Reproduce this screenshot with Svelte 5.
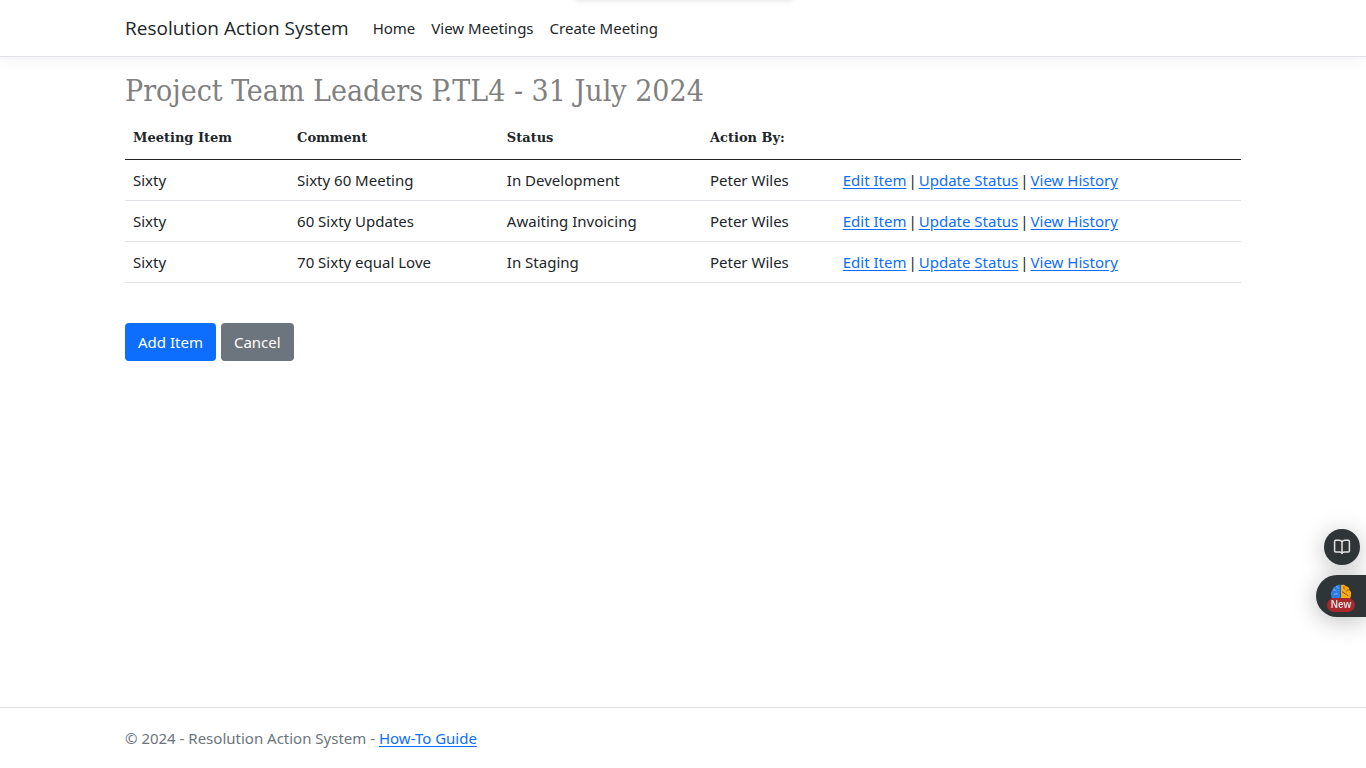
<script>
  const nav = ['Home', 'View Meetings', 'Create Meeting'];
  const actions = ['Edit Item', 'Update Status', 'View History'];
  const items = [
    { item: 'Sixty', comment: 'Sixty 60 Meeting', status: 'In Development', by: 'Peter Wiles' },
    { item: 'Sixty', comment: '60 Sixty Updates', status: 'Awaiting Invoicing', by: 'Peter Wiles' },
    { item: 'Sixty', comment: '70 Sixty equal Love', status: 'In Staging', by: 'Peter Wiles' }
  ];
</script>

<div class="page">
  <div class="top-shadow"></div>
  <header>
    <nav class="container">
      <a class="brand" href="#home">Resolution Action System</a>
      {#each nav as label}
        <a class="nav-link" href="#nav">{label}</a>
      {/each}
    </nav>
  </header>

  <main class="container">
    <h1>Project Team Leaders P.TL4 - 31 July 2024</h1>
    <table>
      <colgroup>
        <col class="c-item" /><col class="c-comment" /><col class="c-status" /><col class="c-by" /><col />
      </colgroup>
      <thead>
        <tr><th>Meeting Item</th><th>Comment</th><th>Status</th><th>Action By:</th><th></th></tr>
      </thead>
      <tbody>
        {#each items as row}
          <tr>
            <td>{row.item}</td>
            <td>{row.comment}</td>
            <td>{row.status}</td>
            <td>{row.by}</td>
            <td>
              <div class="actions">
                {#each actions as action, i}
                  {#if i > 0}<span>|</span>{/if}
                  <a href="#action">{action}</a>
                {/each}
              </div>
            </td>
          </tr>
        {/each}
      </tbody>
    </table>
    <div class="buttons">
      <button class="primary" type="button">Add Item</button>
      <button class="secondary" type="button">Cancel</button>
    </div>
  </main>

  <footer>
    <div class="container">© 2024 - Resolution Action System - <a href="#guide">How-To Guide</a></div>
  </footer>

  <aside>
    <button class="reader" type="button" aria-label="Reader">
      <svg width="18" height="18" viewBox="0 0 18 18" fill="none" stroke="#e4e2df" stroke-width="1.5" stroke-linejoin="round" stroke-linecap="round">
        <path d="M9 4.200C8.500 3 7.600 2.300 6.200 2.300H2.700Q1.600 2.300 1.600 3.400V13Q1.600 14 2.700 14H6.800C8 14 8.700 14.500 9 15.500 9.300 14.500 10 14 11.200 14H15.300Q16.400 14 16.400 13V3.400Q16.400 2.300 15.300 2.300H11.800C10.400 2.300 9.500 3 9 4.200zM9 4.200V15.500" />
      </svg>
    </button>
    <button class="brain" type="button">
      <svg width="22" height="20" viewBox="0 0 22 20">
        <path d="M10.600 1C8.500 .3 6.700 1.100 6 2.300 3.500 2.500 2.600 4.400 2.700 6 .8 7.300.5 9.500 1.200 11.500 1 14 3 16 5.500 16h5.100z" fill="#2b7de9" />
        <path d="M11 1c2.500-.7 4.300.1 5 1.300 2.500.2 3.400 2.100 3.300 3.700 1.900 1.300 2.200 3.500 1.500 5.500.2 2.500-1.800 4.500-4.300 4.500H11z" fill="#fbac13" />
        <path d="M2.700 6c1.500-.5 2.600 0 3.300 1M6 2.300c1.700.1 2.300 1.200 2 2.500M4 11c1.200-1.700 2.700-1.700 4-.7" fill="none" stroke="#79b8ff" stroke-width="1" />
        <path d="M19.300 6c-1.700-.3-2.500.4-3.300 1.500M14 2.500c-.5 1.500 0 2.500 1.200 3M12 8c1.500-.3 2.400.7 2.600 2M18 12c-.5-1.500-1.500-2-2.800-2" fill="none" stroke="#8d4b08" stroke-width="1" />
      </svg>
      <span>New</span>
    </button>
  </aside>
</div>

<style>
  :global(body) {
    margin: 0;
    background: #fff;
    color: #212529;
    font: 15px/24px "Noto Sans", "Open Sans", sans-serif;
  }
  .page {
    position: relative;
    min-height: 100vh;
    display: flex;
    flex-direction: column;
    overflow: hidden;
  }
  .top-shadow {
    position: absolute;
    top: -8px;
    left: 50%;
    width: 220px;
    height: 8px;
    margin-left: -109px;
    border-radius: 4px;
    box-shadow: 0 0 6px rgba(0, 0, 0, 0.14);
  }
  .container {
    box-sizing: border-box;
    width: 100%;
    max-width: 1140px;
    margin: 0 auto;
    padding: 0 12px;
  }
  header {
    border-bottom: 1px solid #dee2e6;
    box-shadow: 0 4px 12px rgba(0, 0, 0, 0.05);
  }
  nav {
    display: flex;
    align-items: center;
    min-height: 56px;
    gap: 16px;
  }
  nav a {
    color: #212529;
    text-decoration: none;
  }
  .brand {
    font-family: "Open Sans", "Noto Sans", sans-serif;
    font-size: 19px;
    line-height: 30px;
    margin-right: 8px;
  }
  main {
    flex: 1;
  }
  h1 {
    margin: 15px 0 7px;
    color: gray;
    font: 400 30px/38px "DejaVu Serif Condensed", "DejaVu Serif", serif;
  }
  table {
    width: 100%;
    table-layout: fixed;
    border-collapse: collapse;
  }
  .c-item { width: 14.7%; }
  .c-comment { width: 18.8%; }
  .c-status { width: 18.2%; }
  .c-by { width: 11.9%; }
  th, td {
    padding: 8px;
    text-align: left;
    border-bottom: 1px solid #dee2e6;
  }
  th {
    height: 26px;
    vertical-align: top;
    font: 700 13px/26px "DejaVu Serif", serif;
    border-bottom-color: #212529;
  }
  .actions {
    display: flex;
    gap: 2px;
  }
  a {
    color: #0d6efd;
    text-underline-offset: 2px;
  }
  .buttons {
    display: flex;
    gap: 5px;
    margin-top: 40px;
  }
  .buttons button {
    padding: 7px 13px;
    border: 0;
    border-radius: 4px;
    color: #fff;
    font: inherit;
  }
  .primary { background: #0d6efd; }
  .secondary { background: #6c757d; }
  footer {
    border-top: 1px solid #dee2e6;
    color: #6c757d;
    line-height: 60px;
  }
  aside {
    position: fixed;
    right: 0;
    bottom: 151px;
    display: flex;
    flex-direction: column;
    align-items: flex-end;
    gap: 10px;
  }
  aside button {
    display: flex;
    align-items: center;
    justify-content: center;
    padding: 0;
    border: 0;
    background: #2f3437;
    box-shadow: 0 4px 24px rgba(0, 0, 0, 0.25);
  }
  .reader {
    width: 36px;
    height: 36px;
    margin-right: 6px;
    border-radius: 50%;
  }
  .brain {
    width: 50px;
    height: 42px;
    flex-direction: column;
    border-radius: 21px 0 0 21px;
  }
  .brain svg {
    margin-top: 4px;
    margin-bottom: -6px;
  }
  .brain span {
    position: relative;
    padding: 0 4px;
    border-radius: 7px;
    background: #a8282c;
    color: #ddd;
    font: 700 10px/14px "Liberation Sans", sans-serif;
  }
</style>
